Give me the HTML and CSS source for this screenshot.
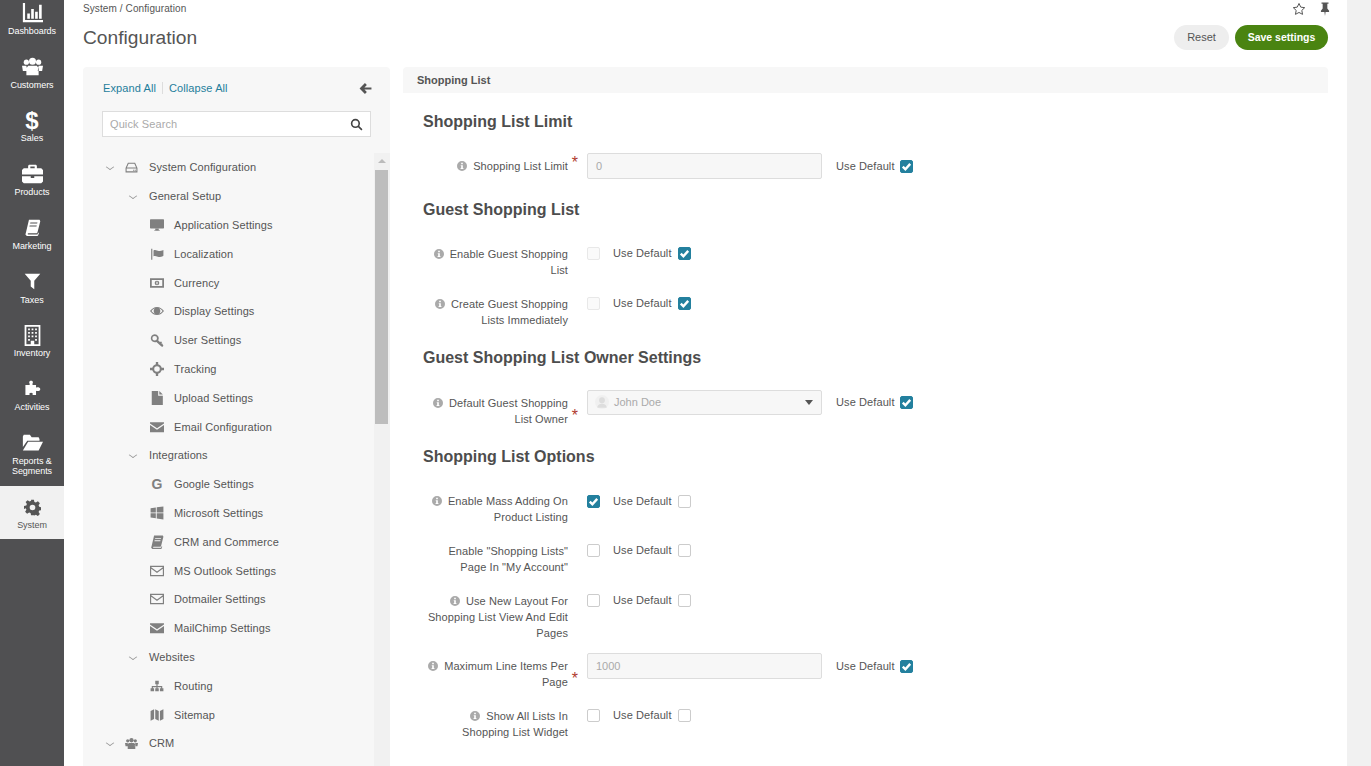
FILE: index.html
```html
<!DOCTYPE html>
<html lang="en">
<head>
  <meta charset="UTF-8" />
  <title>Configuration</title>
  <link rel="stylesheet" href="styles.css">
</head>
<body>

  <svg class="sprite" xmlns="http://www.w3.org/2000/svg">
    <symbol id="i-chart" viewBox="0 0 24 24"><path d="M1 1h2.500v19.500H24V23H1z"/><path d="M6 13h3v6H6zM10.500 8h3v11h-3zM15 11h3v8h-3zM19.500 3h3v16h-3z"/></symbol>
    <symbol id="i-users" viewBox="0 0 24 24"><circle cx="5" cy="7" r="3"/><circle cx="19" cy="7" r="3"/><circle cx="12" cy="6" r="4"/><path d="M0 11h5l1 6H1zM24 11h-5l-1 6h5zM7 11h10l2 3v8H5v-8z"/></symbol>
    <symbol id="i-case" viewBox="0 0 24 24"><path fill-rule="evenodd" d="M8 2h8l1 1v3h5l2 2v5H0V8l2-2h5V3zM9.500 4v2h5V4z"/><path d="M0 15h10v2h4v-2h10v6l-2 2H2l-2-2z"/></symbol>
    <symbol id="i-book" viewBox="0 0 24 24"><path fill-rule="evenodd" d="M7 1h15l1 2-4 16-1 1H6l-1 1 1 1h13l1-3 1 1-1 3-1 1H4l-2-2 1-4zM9 5l-.4 1.500h10L19 5zM8 9l-.4 1.500h10L18 9z"/></symbol>
    <symbol id="i-filter" viewBox="0 0 24 24"><path d="M1 1h22l-8.500 10v12l-5-4v-8z"/></symbol>
    <symbol id="i-building" viewBox="0 0 24 24"><path fill-rule="evenodd" d="M3 0h18v24H3zM5 2v20h5v-4h4v4h5V2z"/><path d="M7 4h2v2H7zM11 4h2v2h-2zM15 4h2v2h-2zM7 8h2v2H7zM11 8h2v2h-2zM15 8h2v2h-2zM7 12h2v2H7zM11 12h2v2h-2zM15 12h2v2h-2zM7 16h2v2H7zM15 16h2v2h-2z"/></symbol>
    <symbol id="i-puzzle" viewBox="0 0 24 24"><path d="M8 7V5c-1-1-1-4 2-4s3 3 2 4v2h5v4c1-1 6-1 6 2s-5 3-6 2v6h-5c1-2 0-3-2-3s-3 1-2 3H2V7z"/></symbol>
    <symbol id="i-folder" viewBox="0 0 24 24"><path d="M1 5l1-2h7l2 3h8l1 2v2H6L1 17z"/><path d="M7 11h17l-5 10H1z"/></symbol>
    <symbol id="i-cog" viewBox="0 0 24 24"><path fill-rule="evenodd" d="M10 1h4l.7 3.200 2.100.9 2.800-1.800 2.800 2.800-1.800 2.800.9 2.100 3.200.7v4l-3.200.7-.9 2.100 1.800 2.800-2.800 2.800-2.800-1.800-2.100.9L14 23h-4l-.7-3.200-2.100-.9-2.800 1.800-2.800-2.800 1.800-2.800-.9-2.100L0 14v-4l3.200-.7.9-2.100L2.300 4.400l2.800-2.800 2.800 1.800 2.100-.9zM12 8a4 4 0 1 0 0 8 4 4 0 0 0 0-8z"/></symbol>
    <symbol id="i-hdd" viewBox="0 0 24 24"><path fill="none" stroke="currentColor" stroke-width="2" d="M6 4h12l4 9v7H2v-7zM2 13h20"/><path d="M15 16h2v2h-2zM18 16h2v2h-2z"/></symbol>
    <symbol id="i-desktop" viewBox="0 0 24 24"><path d="M1 2h22l1 1v14l-1 1H1l-1-1V3z"/><path d="M9 18h6v3h2v1H7v-1h2z"/></symbol>
    <symbol id="i-flag" viewBox="0 0 24 24"><path d="M2 3h2v19H2zM6 6c4-2 6 1 9 1s5-1 8-2v10c-3 2-5 2-8 2s-5-3-9-1z"/></symbol>
    <symbol id="i-money" viewBox="0 0 24 24"><path fill-rule="evenodd" d="M0 4h24v16H0zM3 7v10h18V7zM12 8a4 4 0 1 0 0 8 4 4 0 0 0 0-8zM11 10h2v4h-2z"/></symbol>
    <symbol id="i-eye" viewBox="0 0 24 24"><path fill-rule="evenodd" d="M12 5c5 0 9 3 12 7-3 4-7 7-12 7S3 16 0 12c3-4 7-7 12-7zM2.500 12c2 2.500 4 4 6 4.700a6 6 0 0 1 0-9.400c-2 .7-4 2.200-6 4.700zM15.500 7.300a6 6 0 0 1 0 9.400c2-.7 4-2.200 6-4.700-2-2.500-4-4-6-4.700z"/></symbol>
    <symbol id="i-key" viewBox="0 0 24 24"><path fill-rule="evenodd" d="M8 2a7 7 0 0 1 6 10.500l3 3 2-1 1.500 1.500-1 2 2 .5.500 2 1 1-1 2-2.500-.5-8.500-7.500A7 7 0 1 1 8 2zM8 5a4 4 0 1 0 0 8 4 4 0 0 0 0-8z"/></symbol>
    <symbol id="i-target" viewBox="0 0 24 24"><path fill="none" stroke="currentColor" stroke-width="3.500" d="M12 5.500a6.500 6.500 0 1 0 0 13 6.500 6.500 0 0 0 0-13z"/><path d="M10 0h4v6h-4zM10 18h4v6h-4zM0 10h6v4H0zM18 10h6v4h-6z"/></symbol>
    <symbol id="i-file" viewBox="0 0 24 24"><path d="M3 0h11v8h8v16H3z"/><path d="M16 0l6 6h-6z"/></symbol>
    <symbol id="i-mail" viewBox="0 0 24 24"><path d="M0 4h24v2L12 14 0 6z"/><path d="M0 8.500l12 8 12-8V21H0z"/></symbol>
    <symbol id="i-mail-o" viewBox="0 0 24 24"><path fill="none" stroke="currentColor" stroke-width="2" d="M1 4h22v16H1zM1 6l11 8 11-8"/></symbol>
    <symbol id="i-win" viewBox="0 0 24 24"><path d="M1 4l9-1.500V11H1zM11.500 2.300L23 1v10H11.500zM1 12.500h9V21l-9-1.500zM11.500 12.500H23V23l-11.500-1.500z"/></symbol>
    <symbol id="i-sitemap" viewBox="0 0 24 24"><path d="M9 3h6v6h-2v3h8v4h2v5h-6v-5h2v-2h-6v2h2v5H9v-5h2v-2H5v2h2v5H1v-5h2v-4h8V9H9z"/></symbol>
    <symbol id="i-map" viewBox="0 0 24 24"><path d="M1 5l6-3v17l-6 3zM9 2l6 3v17l-6-3zM17 5l6-3v17l-6 3z"/></symbol>
    <symbol id="i-info" viewBox="0 0 12 12"><path fill-rule="evenodd" d="M6 0a6 6 0 1 1 0 12A6 6 0 0 1 6 0zM5 2.200v1.800h2V2.200zM4.500 5v1H5v2.500h-.7v1h3.400v-1H7V5z"/></symbol>
    <symbol id="i-check" viewBox="0 0 14 14"><path fill="none" stroke="#fff" stroke-width="2.600" d="M3 7.200l2.800 2.800L11 4.200"/></symbol>
  </svg>

  <div class="app">
    <nav class="sidebar">
      <a class="nav-item"><svg class="nav-icon"><use href="#i-chart"/></svg>Dashboards</a>
      <a class="nav-item"><svg class="nav-icon"><use href="#i-users"/></svg>Customers</a>
      <a class="nav-item"><span class="nav-dollar">$</span>Sales</a>
      <a class="nav-item"><svg class="nav-icon"><use href="#i-case"/></svg>Products</a>
      <a class="nav-item"><svg class="nav-icon nav-icon-sm"><use href="#i-book"/></svg>Marketing</a>
      <a class="nav-item"><svg class="nav-icon nav-icon-sm"><use href="#i-filter"/></svg>Taxes</a>
      <a class="nav-item"><svg class="nav-icon nav-icon-up"><use href="#i-building"/></svg>Inventory</a>
      <a class="nav-item"><svg class="nav-icon nav-icon-sm"><use href="#i-puzzle"/></svg>Activities</a>
      <a class="nav-item nav-double"><svg class="nav-icon"><use href="#i-folder"/></svg>Reports &amp;<br>Segments</a>
      <a class="nav-item nav-active"><svg class="nav-icon nav-icon-sm nav-icon-up"><use href="#i-cog"/></svg>System</a>
    </nav>

    <main class="main">
      <div class="crumbs">
        <span>System / Configuration</span>
        <div class="crumb-tools">
          <svg class="tool-icon" viewBox="0 0 24 24"><path fill="none" stroke="#555" stroke-width="1.700" d="M12 2.500l3 6.300 6.800.9-5 4.700 1.300 6.800-6.100-3.300-6.100 3.300 1.300-6.800-5-4.700 6.800-.9z"/></svg>
          <svg class="tool-icon" viewBox="0 0 24 24"><path fill="#555" d="M6 1h12v2h-2v8l3 4v2h-6l-1 7-1-7H5v-2l3-4V3H6z"/></svg>
        </div>
      </div>

      <div class="title-row">
        <h1>Configuration</h1>
        <div class="actions">
          <button class="btn btn-reset">Reset</button>
          <button class="btn btn-save">Save settings</button>
        </div>
      </div>

      <div class="columns">
        <aside class="panel">
          <div class="panel-top">
            <div class="panel-links">
              <a>Expand All</a><i></i><a>Collapse All</a>
              <svg class="back-arrow" viewBox="0 0 24 24"><path fill="#555" d="M11 2l3.500 3.500L10 10h13v4H10l4.500 4.500L11 22 1 12z"/></svg>
            </div>
            <div class="search">
              <span>Quick Search</span>
              <svg viewBox="0 0 24 24"><path fill="none" stroke="#444" stroke-width="3" d="M10 3a7 7 0 1 0 0 14 7 7 0 0 0 0-14zM15 15l7 7"/></svg>
            </div>
          </div>
          <div class="tree-wrap">
            <ul class="tree">
              <li class="lv1"><b class="chev"></b><svg><use href="#i-hdd"/></svg>System Configuration</li>
              <li class="lv2"><b class="chev"></b>General Setup</li>
              <li class="lv3"><svg><use href="#i-desktop"/></svg>Application Settings</li>
              <li class="lv3"><svg><use href="#i-flag"/></svg>Localization</li>
              <li class="lv3"><svg><use href="#i-money"/></svg>Currency</li>
              <li class="lv3"><svg><use href="#i-eye"/></svg>Display Settings</li>
              <li class="lv3"><svg><use href="#i-key"/></svg>User Settings</li>
              <li class="lv3"><svg><use href="#i-target"/></svg>Tracking</li>
              <li class="lv3"><svg><use href="#i-file"/></svg>Upload Settings</li>
              <li class="lv3"><svg><use href="#i-mail"/></svg>Email Configuration</li>
              <li class="lv2"><b class="chev"></b>Integrations</li>
              <li class="lv3"><span class="g-icon">G</span>Google Settings</li>
              <li class="lv3"><svg><use href="#i-win"/></svg>Microsoft Settings</li>
              <li class="lv3"><svg><use href="#i-book"/></svg>CRM and Commerce</li>
              <li class="lv3"><svg><use href="#i-mail-o"/></svg>MS Outlook Settings</li>
              <li class="lv3"><svg><use href="#i-mail-o"/></svg>Dotmailer Settings</li>
              <li class="lv3"><svg><use href="#i-mail"/></svg>MailChimp Settings</li>
              <li class="lv2"><b class="chev"></b>Websites</li>
              <li class="lv3"><svg><use href="#i-sitemap"/></svg>Routing</li>
              <li class="lv3"><svg><use href="#i-map"/></svg>Sitemap</li>
              <li class="lv1"><b class="chev"></b><svg><use href="#i-users"/></svg>CRM</li>
            </ul>
            <div class="tree-scroll">
              <span class="tree-up"></span>
              <span class="tree-thumb"></span>
            </div>
          </div>
        </aside>

        <section class="content">
          <div class="content-head">Shopping List</div>
          <div class="form">

            <h3>Shopping List Limit</h3>
            <div class="field field-input">
              <label><svg class="info"><use href="#i-info"/></svg>Shopping List Limit<em>*</em></label>
              <div class="text-box">0</div>
              <span class="use-default">Use Default</span><span class="box on"><svg><use href="#i-check"/></svg></span>
            </div>

            <h3>Guest Shopping List</h3>
            <div class="field">
              <label><svg class="info"><use href="#i-info"/></svg>Enable Guest Shopping<br>List</label>
              <span class="box off"></span>
              <span class="use-default">Use Default</span><span class="box on"><svg><use href="#i-check"/></svg></span>
            </div>
            <div class="field">
              <label><svg class="info"><use href="#i-info"/></svg>Create Guest Shopping<br>Lists Immediately</label>
              <span class="box off"></span>
              <span class="use-default">Use Default</span><span class="box on"><svg><use href="#i-check"/></svg></span>
            </div>

            <h3>Guest Shopping List Owner Settings</h3>
            <div class="field field-input field-owner">
              <label><svg class="info"><use href="#i-info"/></svg>Default Guest Shopping<br>List Owner<em>*</em></label>
              <div class="text-box select-box">
                <span class="avatar"><svg viewBox="0 0 24 24"><path fill="#ddd" d="M12 4a5 5 0 1 1 0 10 5 5 0 0 1 0-10zM4 22c0-5 4-7 8-7s8 2 8 7z"/></svg></span>John Doe<i class="caret"></i>
              </div>
              <span class="use-default">Use Default</span><span class="box on"><svg><use href="#i-check"/></svg></span>
            </div>

            <h3>Shopping List Options</h3>
            <div class="field field-drop">
              <label><svg class="info"><use href="#i-info"/></svg>Enable Mass Adding On<br>Product Listing</label>
              <span class="box on"><svg><use href="#i-check"/></svg></span>
              <span class="use-default">Use Default</span><span class="box"></span>
            </div>
            <div class="field">
              <label>Enable "Shopping Lists"<br>Page In "My Account"</label>
              <span class="box"></span>
              <span class="use-default">Use Default</span><span class="box"></span>
            </div>
            <div class="field field-tall">
              <label><svg class="info"><use href="#i-info"/></svg>Use New Layout For<br>Shopping List View And Edit<br>Pages</label>
              <span class="box"></span>
              <span class="use-default">Use Default</span><span class="box"></span>
            </div>
            <div class="field field-input">
              <label><svg class="info"><use href="#i-info"/></svg>Maximum Line Items Per<br>Page<em>*</em></label>
              <div class="text-box">1000</div>
              <span class="use-default">Use Default</span><span class="box on"><svg><use href="#i-check"/></svg></span>
            </div>
            <div class="field">
              <label><svg class="info"><use href="#i-info"/></svg>Show All Lists In<br>Shopping List Widget</label>
              <span class="box"></span>
              <span class="use-default">Use Default</span><span class="box"></span>
            </div>

          </div>
        </section>
      </div>
    </main>

    <div class="page-scroll"></div>
  </div>

</body>
</html>
```

FILE: styles.css
```css
* {
  box-sizing: border-box;
}
html, body {
  height: 100%;
  margin: 0;
  overflow: hidden;
}
body {
  font-family: "Liberation Sans", Arial, sans-serif;
  font-size: 12px;
  color: #555;
  background: #fff;
}
.sprite {
  display: none;
}
.app {
  display: flex;
  height: 766px;
}

/* left nav */
.sidebar {
  width: 64px;
  flex: none;
  background: #505052;
  overflow: hidden;
}
.nav-item {
  display: flex;
  flex-direction: column;
  align-items: center;
  height: 53.75px;
  padding-top: 11px;
  color: #fff;
  font-size: 9px;
  line-height: 10px;
  letter-spacing: -.05px;
  text-align: center;
}
.nav-item:first-child {
  margin-top: -9px;
}
.nav-icon {
  display: block;
  width: 21px;
  height: 21px;
  margin-bottom: 3px;
  fill: #fff;
  flex: none;
}
.nav-icon-sm {
  width: 17px;
  height: 17px;
  margin: 2px 0 5px;
}
.nav-icon-up {
  margin-bottom: 2px;
}
.nav-icon-sm.nav-icon-up {
  margin-bottom: 4px;
}
.nav-dollar {
  display: block;
  height: 23px;
  font-size: 24px;
  line-height: 21px;
  font-weight: bold;
}
.nav-double {
  height: 64.500px;
}
.nav-active {
  background: #f1f1f1;
  color: #555;
}
.nav-active .nav-icon {
  fill: #555;
}

/* main area */
.main {
  flex: 1;
  min-width: 0;
  padding: 2px 19px 0 19px;
}
.crumbs {
  display: flex;
  justify-content: space-between;
  height: 13px;
  font-size: 10px;
  line-height: 13px;
  letter-spacing: .1px;
}
.crumb-tools {
  display: flex;
  gap: 12px;
  margin-right: -4px;
}
.tool-icon {
  width: 14px;
  height: 14px;
}
.title-row {
  display: flex;
  justify-content: space-between;
  align-items: center;
  height: 26px;
  margin-top: 9px;
  margin-bottom: 17px;
}
h1 {
  margin: 0;
  padding-top: 1px;
  font-size: 19.2px;
  font-weight: normal;
  line-height: 26px;
}
.actions {
  display: flex;
  gap: 6px;
}
.btn {
  height: 25px;
  border: none;
  border-radius: 13px;
  font-family: inherit;
  font-size: 11px;
  padding: 0;
}
.btn-reset {
  width: 55px;
  background: #eee;
  color: #555;
}
.btn-save {
  width: 93px;
  background: #4a8411;
  color: #fff;
  font-size: 10.500px;
  font-weight: bold;
}
.columns {
  display: flex;
  gap: 13px;
  height: 699px;
}

/* tree panel */
.panel {
  width: 307px;
  flex: none;
  display: flex;
  flex-direction: column;
  background: #f7f7f7;
  border-radius: 4px 4px 0 0;
  overflow: hidden;
}
.panel-top {
  padding: 14px 19px 0 19px;
  height: 86px;
}
.panel-links {
  display: flex;
  align-items: center;
  height: 14px;
  padding-left: 1px;
  font-size: 11px;
  letter-spacing: .1px;
  color: #1f7e9c;
}
.panel-links i {
  width: 1px;
  height: 12px;
  margin: 0 6px;
  background: #ddd;
}
.back-arrow {
  width: 13px;
  height: 13px;
  margin-left: auto;
  margin-right: -1px;
}
.search {
  display: flex;
  justify-content: space-between;
  align-items: center;
  height: 26px;
  margin-top: 16px;
  padding: 0 7px 0 7px;
  background: #fff;
  border: 1px solid #ddd;
  font-size: 11px;
  letter-spacing: .1px;
  color: #aaa;
}
.search svg {
  width: 13px;
  height: 13px;
}
.tree-wrap {
  display: flex;
  flex: 1;
  min-height: 0;
}
.tree {
  flex: 1;
  list-style: none;
  margin: 0;
  padding: 0;
}
.tree li {
  display: flex;
  align-items: center;
  height: 28.800px;
  font-size: 11px;
  letter-spacing: .1px;
}
.tree svg, .g-icon {
  flex: none;
  fill: #808080;
  color: #808080;
}
.chev {
  flex: none;
  width: 6px;
  height: 6px;
  border-right: 1px solid #999;
  border-bottom: 1px solid #999;
  transform: scale(1, .7) rotate(45deg);
}
.lv1 {
  padding-left: 24px;
}
.lv1 svg {
  width: 13px;
  height: 13px;
  margin-left: 12px;
  margin-right: 11px;
}
.lv2 {
  padding-left: 47px;
}
.lv2 .chev {
  margin-right: 13px;
}
.lv3 {
  padding-left: 67px;
}
.lv3 svg, .g-icon {
  width: 14px;
  height: 14px;
  margin-right: 10px;
}
.g-icon {
  font-size: 14px;
  font-weight: bold;
  line-height: 14px;
  text-align: center;
}
.tree-scroll {
  position: relative;
  width: 16px;
  flex: none;
  background: #f1f1f1;
}
.tree-up {
  position: absolute;
  top: 6px;
  left: 4px;
  border: 4px solid transparent;
  border-top: 0;
  border-bottom: 4px solid #bbb;
}
.tree-thumb {
  position: absolute;
  top: 17px;
  left: 1px;
  width: 13px;
  height: 254px;
  background: #bdbdbd;
}

/* form */
.content {
  flex: 1;
  min-width: 0;
}
.content-head {
  height: 26px;
  padding-left: 14px;
  background: #f7f7f7;
  border-radius: 4px 4px 0 0;
  font-size: 11px;
  font-weight: bold;
  line-height: 27px;
}
.form {
  padding: 17px 0 0 20px;
}
h3 {
  margin: 2px 0 26px 0;
  font-size: 16px;
  line-height: 20px;
  font-weight: bold;
  color: #4d4d4d;
}
.field {
  display: flex;
  align-items: flex-start;
  padding-bottom: 18px;
}
.field label {
  position: relative;
  width: 145px;
  flex: none;
  margin-right: 19px;
  text-align: right;
  font-size: 11px;
  line-height: 16px;
  letter-spacing: .1px;
}
.field label em {
  position: absolute;
  right: -10px;
  bottom: 3px;
  font-style: normal;
  font-size: 16px;
  line-height: 16px;
  color: #b03a2e;
}
.info {
  width: 10px;
  height: 10px;
  margin-right: 6px;
  vertical-align: -1px;
  fill: #aaa;
}
.field-input {
  margin-top: -5px;
}
.field-input label {
  padding-top: 5px;
}
.field-tall {
  padding-bottom: 17px;
}
.field-owner label {
  padding-top: 6px;
}
.field-drop .box, .field-drop .use-default {
  position: relative;
  top: 1px;
}
.text-box {
  width: 235px;
  height: 26px;
  margin-bottom: 1px;
  padding-left: 8px;
  background: #f7f7f7;
  border: 1px solid #ddd;
  border-radius: 2px;
  color: #aaa;
  font-size: 11px;
  line-height: 24px;
}
.select-box {
  display: flex;
  align-items: center;
  height: 25px;
  margin-top: 1px;
  padding-left: 7px;
  padding-bottom: 1px;
}
.avatar {
  width: 14px;
  height: 14px;
  margin-right: 5px;
  border-radius: 50%;
  background: #f0f0f0;
}
.avatar svg {
  display: block;
  width: 14px;
  height: 14px;
}
.caret {
  margin-left: auto;
  margin-right: 8px;
  border: 4px solid transparent;
  border-bottom: 0;
  border-top: 5px solid #555;
}
.use-default {
  margin-left: 13px;
  margin-right: 6px;
  font-size: 11px;
  line-height: 14px;
  letter-spacing: .1px;
}
.field-input .use-default {
  margin-left: 14px;
  margin-right: 5px;
  margin-top: 6px;
}
.box {
  width: 13px;
  height: 13px;
  flex: none;
  margin-top: 1px;
  background: #fff;
  border: 1px solid #ccc;
  border-radius: 2px;
}
.field-input .box {
  margin-top: 7px;
}
.box.off {
  background: #fafafa;
  border-color: #e8e8e8;
}
.box.on {
  background: #23809e;
  border-color: #23809e;
}
.box svg {
  display: block;
  width: 13px;
  height: 13px;
  margin: -1px;
}

.page-scroll {
  width: 24px;
  flex: none;
  background: #f1f1f1;
}
```
